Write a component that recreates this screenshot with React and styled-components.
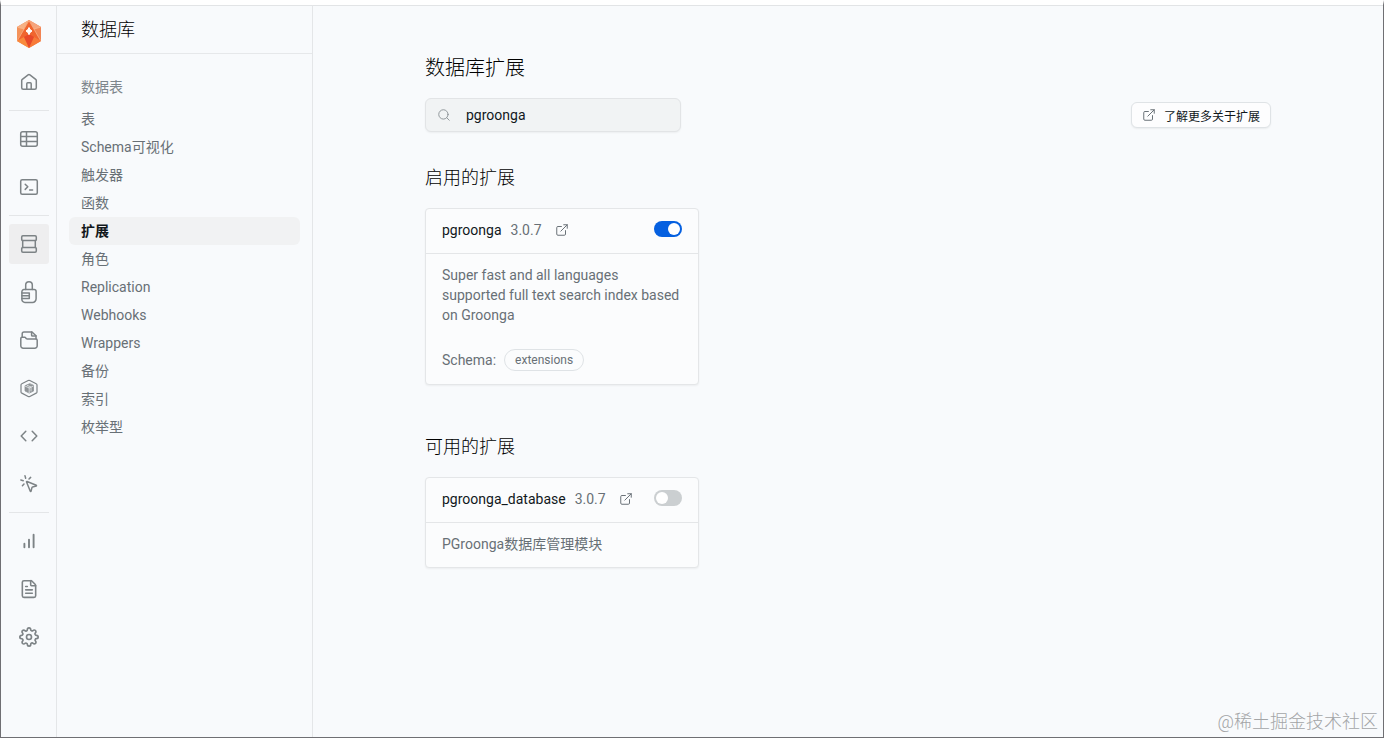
import React, { useState } from "react";
import styled, { createGlobalStyle } from "styled-components";
import { ExternalLink, FileText, MousePointerClick, Search } from "lucide-react";
import { FiSettings } from "react-icons/fi";

const menuItems = [
  "表",
  "Schema可视化",
  "触发器",
  "函数",
  "扩展",
  "角色",
  "Replication",
  "Webhooks",
  "Wrappers",
  "备份",
  "索引",
  "枚举型",
];

const railGroups = [
  [{ label: "首页", icon: <HomeIcon /> }],
  [
    { label: "表编辑器", icon: <TableIcon /> },
    { label: "SQL", icon: <TerminalIcon /> },
  ],
  [
    { label: "数据库", icon: <DatabaseIcon />, active: true },
    { label: "认证", icon: <LockIcon /> },
    { label: "存储", icon: <FolderIcon /> },
    { label: "函数", icon: <CubeIcon /> },
    { label: "API", icon: <CodeIcon /> },
    { label: "实时", icon: <MousePointerClick size={20} strokeWidth={1.8} /> },
  ],
  [
    { label: "报告", icon: <BarsIcon /> },
    { label: "日志", icon: <FileText size={20} strokeWidth={1.9} /> },
    { label: "设置", icon: <FiSettings size={20} strokeWidth={2} /> },
  ],
];

export default function App() {
  const [keyword, setKeyword] = useState("pgroonga");
  const [current, setCurrent] = useState("扩展");

  return (
    <>
      <GlobalStyle />
      <Window>
        <Rail aria-label="主导航">
          <RailLink href="#home" aria-label="控制台">
            <Logo />
          </RailLink>
          {railGroups.map((group, i) => (
            <React.Fragment key={i}>
              {i > 0 && <RailLine />}
              {group.map((it) => (
                <RailLink
                  key={it.label}
                  href="#"
                  aria-label={it.label}
                  $active={it.active}
                >
                  {it.icon}
                </RailLink>
              ))}
            </React.Fragment>
          ))}
        </Rail>

        <Sidebar>
          <SidebarHead>数据库</SidebarHead>
          <Menu>
            <MenuTitle>数据表</MenuTitle>
            {menuItems.map((name) => (
              <MenuLink
                key={name}
                href="#"
                $active={name === current}
                onClick={() => setCurrent(name)}
              >
                {name}
              </MenuLink>
            ))}
          </Menu>
        </Sidebar>

        <Main>
          <PageTitle>数据库扩展</PageTitle>
          <Toolbar>
            <SearchBox>
              <Search size={14} strokeWidth={1.6} />
              <SearchInput
                type="text"
                aria-label="搜索扩展"
                value={keyword}
                onChange={(e) => setKeyword(e.target.value)}
              />
            </SearchBox>
            <DocsButton type="button">
              <ExternalLink size={14} strokeWidth={1.7} />
              了解更多关于扩展
            </DocsButton>
          </Toolbar>

          <Section>
            <SectionTitle>启用的扩展</SectionTitle>
            <Grid>
              <ExtensionCard name="pgroonga" version="3.0.7" enabled>
                <Desc>
                  Super fast and all languages supported full text search index
                  based on Groonga
                </Desc>
                <Schema>
                  Schema:
                  <Pill>extensions</Pill>
                </Schema>
              </ExtensionCard>
            </Grid>
          </Section>

          <Section>
            <SectionTitle>可用的扩展</SectionTitle>
            <Grid>
              <ExtensionCard name="pgroonga_database" version="3.0.7">
                <Desc>PGroonga数据库管理模块</Desc>
              </ExtensionCard>
            </Grid>
          </Section>
        </Main>
        <Watermark>@稀土掘金技术社区</Watermark>
      </Window>
    </>
  );
}

function ExtensionCard({ name, version, enabled = false, children }) {
  const [on, setOn] = useState(enabled);

  return (
    <Card>
      <CardHead>
        <Name>{name}</Name>
        <Version>{version}</Version>
        <IconLink href="#" aria-label={`${name} 文档`}>
          <ExternalLink size={14} strokeWidth={1.7} />
        </IconLink>
        <Switch
          type="checkbox"
          role="switch"
          aria-label={name}
          checked={on}
          onChange={() => setOn(!on)}
        />
      </CardHead>
      <CardBody>{children}</CardBody>
    </Card>
  );
}

/* ===== icons ===== */

function Icon({ children }) {
  return (
    <svg
      width="20"
      height="20"
      viewBox="0 0 20 20"
      overflow="visible"
      fill="none"
      stroke="currentColor"
      strokeWidth="1.5"
      strokeLinecap="round"
      strokeLinejoin="round"
      aria-hidden="true"
    >
      {children}
    </svg>
  );
}

function HomeIcon() {
  return (
    <Icon>
      <path d="M7.8 17.3H4.2a1.5 1.5 0 0 1-1.5-1.5V8.6c0-.5.2-.9.6-1.2l5.8-4.5c.5-.4 1.2-.4 1.8 0l5.8 4.5c.4.3.6.7.6 1.2v7.2a1.5 1.5 0 0 1-1.5 1.5h-3.6M7.8 17.3v-5.6c0-.5.4-.9.9-.9h2.6c.5 0 .9.4.9.9v5.6M7.8 17.3h4.4" />
    </Icon>
  );
}

function TableIcon() {
  return (
    <Icon>
      <rect x="1.7" y="2.7" width="16.6" height="14.6" rx="2" />
      <path d="M7.5 2.7v14.6M1.7 7.6h16.6M1.7 12.4h16.6" />
    </Icon>
  );
}

function TerminalIcon() {
  return (
    <Icon>
      <rect x="1.7" y="2.7" width="16.6" height="14.6" rx="1.5" />
      <path d="M6.2 7.2l2.6 2.6-2.6 2.6M10.6 13h3" />
    </Icon>
  );
}

function DatabaseIcon() {
  return (
    <Icon>
      <rect x="2.7" y="1.7" width="14.6" height="4.9" rx="1.2" />
      <rect x="2.7" y="13.4" width="14.6" height="4.9" rx="1.2" />
      <path d="M3.7 6.6v6.8M16.3 6.6v6.8" />
    </Icon>
  );
}

function LockIcon() {
  return (
    <Icon>
      <path d="M6.7 7.6V3.1a3.3 3.3 0 0 1 6.6 0v4.5" />
      <path d="M2.9 11V9.6a2 2 0 0 1 2-2h10.2a2 2 0 0 1 2 2v7.2a3.6 3.6 0 0 1-3.6 3.6H5.9a3 3 0 0 1-3-3z" />
      <path d="M2.900 10.900h7.400v5.600H2.900M2.900 13.700h7.400" />
    </Icon>
  );
}

function FolderIcon() {
  return (
    <Icon>
      <path d="M3.2 7V3.800c0-1 .8-1.800 1.800-1.800h8l4 3.800v3" />
      <path d="M12.6 2v3.200c0 .5.400.9.900.9H17" />
      <path d="M1.800 8.400c0-.7.500-1.200 1.200-1.200h2.600c.4 0 .8.200 1 .5l.8 1c.2.300.6.400 1 .4H17c.7 0 1.200.6 1.200 1.200v5.500a2.400 2.400 0 0 1-2.400 2.400H4.200a2.400 2.400 0 0 1-2.400-2.400z" />
    </Icon>
  );
}

function CubeIcon() {
  return (
    <Icon>
      <path
        d="M9.200 2.500L2.800 5.700c-.5.200-.8.600-.8 1.200v7c0 .5.300 1 .8 1.200l6.400 3.400c.5.200 1.100.2 1.600 0l6.400-3.400c.5-.2.800-.7.800-1.200v-7c0-.6-.3-1-.8-1.200l-6.400-3.200c-.5-.2-1.100-.2-1.600 0z"
        strokeWidth="1.2"
      />
      <path
        d="M10.500 5.800L6 7.700v5.200l4.200 2.200 4.300-2V7.600z"
        fill="currentColor"
        strokeWidth="0.8"
        opacity="0.85"
      />
      <path
        d="M6.500 8.300l3.700 1.600v4.800M10.200 9.900l3.800-1.700M8.300 7.400l3.700 1.600v4"
        stroke="#f8fafc"
        strokeWidth="0.7"
      />
    </Icon>
  );
}

function CodeIcon() {
  return (
    <Icon>
      <path d="M6.800 5.200L2.200 10l4.600 4.800M13.200 5.200l4.600 4.800-4.600 4.800" />
    </Icon>
  );
}

function BarsIcon() {
  return (
    <Icon>
      <path d="M5.400 16.200v-3.400M10 16.200V8.600M14.600 16.200V3.700" strokeWidth="1.9" />
    </Icon>
  );
}

function Logo() {
  return (
    <svg width="26" height="28" viewBox="0 0 26 28" aria-hidden="true">
      <path d="M13 0l12 7v14l-12 7L1 21V7z" fill="#f37a3e" />
      <path d="M13 0L1 7l7 2z" fill="#f6b184" />
      <path d="M13 0l12 7-7 2z" fill="#f5a47c" />
      <path d="M1 7l7 2-7 12z" fill="#f4925a" />
      <path d="M25 7l-7 2 7 12z" fill="#f28453" />
      <path d="M13 0L8 9 1 21l12-6 12 6-7-12z" fill="#f0652f" />
      <path d="M1 21l7-4 5 11z" fill="#f98a3c" />
      <path d="M25 21l-7-4-5 11z" fill="#f77a38" />
      <path d="M8 17l5-3 5 3-5 11z" fill="#e8492a" />
      <path
        d="M13 .5L1.500 20.500M13 .5l11.500 20M1.500 7.200L8 9M24.500 7.200L18 9"
        fill="none"
        stroke="#fbc9a4"
        strokeWidth="0.6"
      />
      <path
        d="M13 7.500l1 2 2 1.500-2 1.500-1 2.200-1-2.200-2-1.500 2-1.500z"
        fill="#fff"
        stroke="#fff"
      />
    </svg>
  );
}

/* ===== styles ===== */

const GlobalStyle = createGlobalStyle`
  * {
    box-sizing: border-box;
  }

  body {
    margin: 0;
    background: #fff;
    color: #11181c;
    font-family: Roboto, "Noto Sans CJK SC", sans-serif;
    font-size: 14px;
    line-height: 20px;
  }

  input,
  button {
    font-family: inherit;
  }

  a {
    color: inherit;
    text-decoration: none;
  }
`;

const Window = styled.div`
  position: relative;
  display: flex;
  min-height: 100vh;
  border: 1px solid #6f6f73;
  border-top: 5px solid #fff;
  background: #f8fafc;
`;

const Rail = styled.nav`
  display: flex;
  flex-direction: column;
  gap: 8px;
  width: 56px;
  flex-shrink: 0;
  padding: 8px 7px 8px 8px;
  border-top: 1px solid #e2e4e6;
  border-right: 1px solid #e4e6e8;
`;

const RailLink = styled.a`
  display: flex;
  align-items: center;
  justify-content: center;
  width: 40px;
  height: 40px;
  border-radius: 3px;
  background: ${({ $active }) => ($active ? "#eeeeef" : "transparent")};
  color: #7d8386;
`;

const RailLine = styled.div`
  height: 1px;
  background: #e4e6e8;
`;

const Sidebar = styled.aside`
  width: 256px;
  flex-shrink: 0;
  border-top: 1px solid #e2e4e6;
  border-right: 1px solid #e4e6e8;
`;

const SidebarHead = styled.h2`
  display: flex;
  align-items: center;
  height: 48px;
  margin: 0;
  padding: 1px 24px 0;
  border-bottom: 1px solid #e6e8ea;
  color: #000;
  font-size: 18px;
  font-weight: 300;
`;

const Menu = styled.nav`
  padding: 19px 12px;
`;

const MenuTitle = styled.div`
  margin-bottom: 4px;
  padding: 4px 12px;
  color: #7e868c;
`;

const MenuLink = styled.a`
  display: block;
  padding: 4px 12px;
  border-radius: 6px;
  background: ${({ $active }) => ($active ? "#f1f2f3" : "transparent")};
  color: ${({ $active }) => ($active ? "#11181c" : "#687076")};
  font-weight: ${({ $active }) => ($active ? 600 : 400)};
`;

const Main = styled.main`
  flex: 1;
  min-width: 0;
  padding: 47px 112px;
  border-top: 1px solid #e2e4e6;
`;

const PageTitle = styled.h1`
  margin: 0;
  color: #000;
  font-size: 20px;
  font-weight: 300;
  line-height: 30px;
`;

const Toolbar = styled.div`
  display: flex;
  align-items: center;
  justify-content: space-between;
  margin-top: 15px;
`;

const SearchBox = styled.label`
  display: flex;
  align-items: center;
  gap: 15px;
  width: 256px;
  height: 34px;
  padding: 0 11px;
  border: 1px solid #e2e4e6;
  border-radius: 6px;
  background: #f1f3f4;
  box-shadow: 0 1px 2px rgba(0, 0, 0, 0.05);
  color: #8b9196;
`;

const SearchInput = styled.input`
  flex: 1;
  min-width: 0;
  padding: 0;
  border: 0;
  outline: 0;
  background: transparent;
  color: #11181c;
  font-size: 14px;
`;

const DocsButton = styled.button`
  display: flex;
  align-items: center;
  gap: 8px;
  height: 26px;
  padding: 0 10px;
  border: 1px solid #dfe3e6;
  border-radius: 6px;
  background: #fdfdfe;
  box-shadow: 0 1px 2px rgba(0, 0, 0, 0.06);
  color: #11181c;
  font-size: 12px;
  cursor: pointer;

  svg {
    color: #687076;
  }
`;

const Section = styled.section`
  margin-top: 31px;

  & + & {
    margin-top: 47px;
  }
`;

const SectionTitle = styled.h2`
  margin: 0 0 15px;
  color: #000;
  font-size: 18px;
  font-weight: 300;
  line-height: 30px;
`;

const Grid = styled.div`
  display: grid;
  grid-template-columns: repeat(3, minmax(0, 1fr));
  gap: 12px;
`;

const Card = styled.article`
  border: 1px solid #e4e6e8;
  border-radius: 4px;
  background: #fbfcfd;
  box-shadow: 0 1px 2px rgba(0, 0, 0, 0.05);
`;

const CardHead = styled.header`
  display: flex;
  align-items: center;
  height: 45px;
  padding: 0 16px 2px;
  border-bottom: 1px solid #e4e6e8;
`;

const Name = styled.h3`
  margin: 0;
  font-size: 14px;
  font-weight: 400;
`;

const Version = styled.span`
  margin: 0 13px 0 9px;
  color: #687076;
`;

const IconLink = styled.a`
  display: flex;
  color: #687076;
`;

const Switch = styled.input`
  appearance: none;
  display: flex;
  width: 28px;
  height: 16px;
  margin: 0 0 2px auto;
  padding: 2px;
  border-radius: 8px;
  background: #cbcfd1;
  cursor: pointer;

  &::before {
    content: "";
    width: 12px;
    height: 12px;
    border-radius: 50%;
    background: #fff;
  }

  &:checked {
    justify-content: flex-end;
    background: #0560e0;
  }
`;

const CardBody = styled.div`
  padding: 11px 16px 13px;
  color: #687076;
`;

const Desc = styled.p`
  margin: 0;
`;

const Schema = styled.div`
  display: flex;
  align-items: center;
  gap: 8px;
  margin-top: 24px;
`;

const Pill = styled.span`
  height: 22px;
  padding: 0 10px;
  border: 1px solid #dfe3e6;
  border-radius: 11px;
  font-size: 12px;
`;

const Watermark = styled.div`
  position: absolute;
  right: 5px;
  bottom: 5px;
  color: #a3a5a7;
  font-size: 18px;
  font-weight: 300;
`;
